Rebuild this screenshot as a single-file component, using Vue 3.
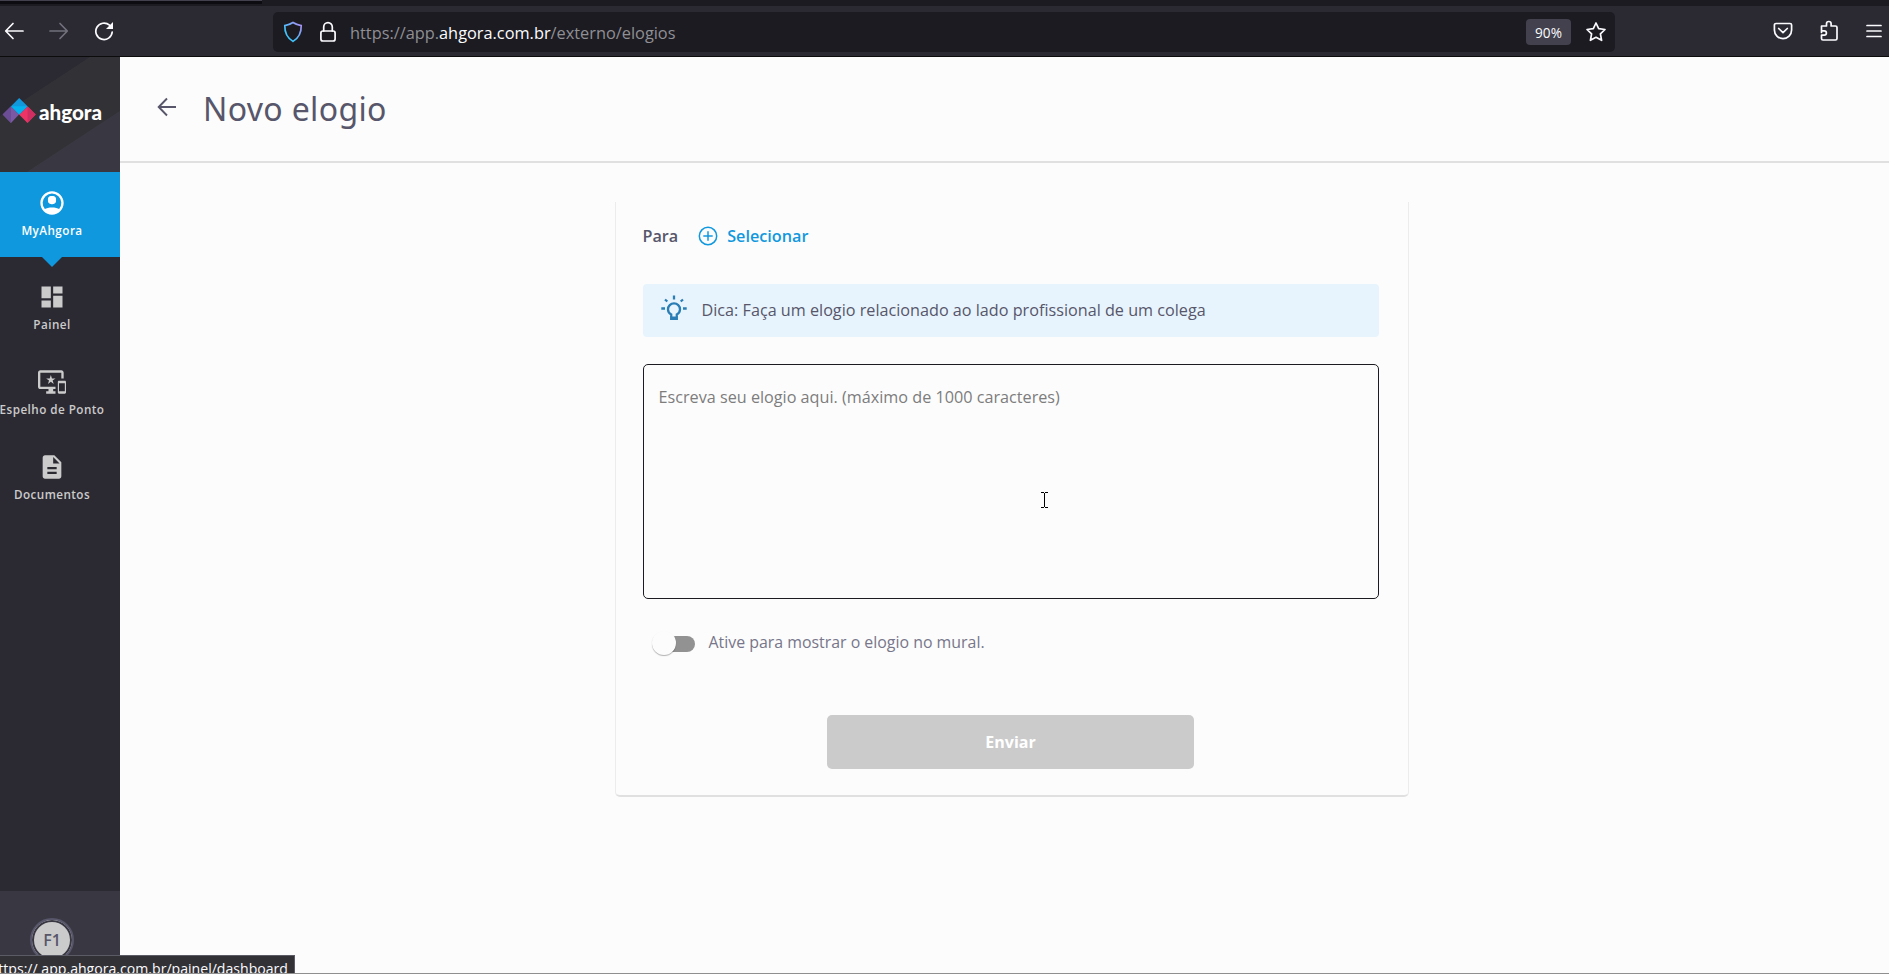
<script setup>
import { ref } from 'vue'

const message = ref('')

const menuItems = [
  {
    label: 'MyAhgora',
    active: true,
    path: 'M12 2C6.480 2 2 6.480 2 12s4.480 10 10 10 10-4.480 10-10S17.520 2 12 2zM5.900 17.100A8 8 0 1 1 18.100 17.100C16 15.300 8 15.300 5.900 17.100zM12 6a3.500 3.500 0 1 0 0 7 3.500 3.500 0 0 0 0-7z',
    extra: 'M12 6a3.500 3.500 0 1 0 0 7 3.500 3.500 0 0 0 0-7z'
  },
  {
    label: 'Painel',
    path: 'M3 13h8V3H3v10zm0 8h8v-6H3v6zm10 0h8V11h-8v10zm0-18v6h8V3h-8z'
  },
  {
    label: 'Espelho de Ponto',
    path: 'M23 11.010L18 11c-.550 0-1 .450-1 1v9c0 .550.450 1 1 1h5c.550 0 1-.450 1-1v-9c0-.550-.450-.990-1-.990zM23 20h-5v-7h5v7zM20 2H2C.890 2 0 2.890 0 4v12c0 1.100.890 2 2 2h7v2H7v2h8v-2h-2v-2h2v-2H2V4h18v5h2V4c0-1.110-.900-2-2-2zm-8.030 7L11 6l-.970 3H7l2.470 1.760-.940 2.910 2.470-1.800 2.470 1.800-.940-2.910L15 9h-3.030z'
  },
  {
    label: 'Documentos',
    path: 'M14 2H6c-1.100 0-1.990.900-1.990 2L4 20c0 1.100.890 2 1.990 2H18c1.100 0 2-.900 2-2V8l-6-6zm2 16H8v-2h8v2zm0-4H8v-2h8v2zm-3-5V3.500L18.500 9H13z'
  }
]
</script>

<template>
  <div class="window">
    <div class="tab-strip">
      <div class="tab-edge"></div>
    </div>

    <div class="toolbar">
      <div class="nav-buttons">
        <svg width="20" height="20" viewBox="0 0 20 20" class="stroke">
          <path d="M19 10H2M9 2.500 1.700 10 9 17.500" />
        </svg>
        <svg width="20" height="20" viewBox="0 0 20 20" class="stroke dim">
          <path d="M1 10h17M11 2.500 18.300 10 11 17.500" />
        </svg>
        <svg width="20" height="20" viewBox="0 0 20 20" class="stroke">
          <path d="M18.200 11A8.200 8.200 0 1 1 15.500 4.200" />
          <path d="M19 1v7h-7z" fill="#fbfbfe" stroke="none" />
        </svg>
      </div>

      <div class="url-bar">
        <svg width="20" height="22" viewBox="0 0 20 22" fill="none">
          <defs>
            <linearGradient id="shield" x1="0" y1="1" x2="1" y2="0">
              <stop offset="0.300" stop-color="#3fc4fb" />
              <stop offset="1" stop-color="#b48cf2" />
            </linearGradient>
          </defs>
          <path
            d="M10 1.500c2.500 1.700 5 2.600 8.200 3.100.2 6.300-2 12-8.200 15.800C3.800 16.600 1.600 10.900 1.800 4.600 5 4.100 7.500 3.200 10 1.500z"
            stroke="url(#shield)"
            stroke-width="1.700"
          />
        </svg>
        <svg class="stroke lock" width="18" height="22" viewBox="0 0 18 22">
          <rect x="1.900" y="10" width="14.200" height="10" rx="2" />
          <path d="M4.700 10V6a4.300 4.300 0 0 1 8.600 0v4" />
        </svg>
        <span class="url">https://app.<b>ahgora.com.br</b>/externo/elogios</span>
        <span class="zoom">90%</span>
        <svg class="stroke star" width="22" height="22" viewBox="0 0 22 22">
          <path d="M11 2l2.700 5.700 6.300.8-4.600 4.400 1.200 6.400L11 16.300l-5.600 3 1.200-6.400L2 8.500l6.300-.8z" />
        </svg>
      </div>

      <div class="tools">
        <svg class="stroke" width="20" height="20" viewBox="0 0 20 20">
          <path d="M3 2.500h14a1.600 1.600 0 0 1 1.600 1.600V9a8.600 8.600 0 0 1-17.200 0V4.100A1.600 1.600 0 0 1 3 2.500zM5.700 7.500 10 11.600l4.300-4.100" />
        </svg>
        <svg class="stroke" width="20" height="22" viewBox="0 0 20 22">
          <path d="M2.500 12.500v-6.500h5V3.800a2.300 2.300 0 0 1 4.600 0V6h4.400a1.500 1.500 0 0 1 1.500 1.500v11a1.500 1.500 0 0 1-1.500 1.500H4a1.500 1.500 0 0 1-1.500-1.500V15.200h2.700a2.200 2.200 0 0 0 0-4.400H2.500" />
        </svg>
        <svg class="stroke" width="18" height="20" viewBox="0 0 18 20">
          <path d="M2 4.500h14M2 10h14M2 15.500h14" />
        </svg>
      </div>
    </div>

    <div class="app">
      <aside class="sidebar">
        <div class="brand">
          <svg width="36" height="28" viewBox="0 0 36 28">
            <path d="M11 9.200 19 17.500 11 26 2.700 17.500z" fill="#7b58a3" />
            <path d="M11 9.200V26L2.700 17.500z" fill="#6b4d96" />
            <path d="M27.500 9.200 35.700 17.500 27.500 26 19 17.500z" fill="#ee3465" />
            <path d="M27.500 9.200 35.700 17.500 27.500 26z" fill="#cf2e62" />
            <path d="M19.200 1 27.500 9.300 19.200 17.600 11 9.300z" fill="#1197dc" />
            <path d="M11 9.300h16.500L19.200 17.600z" fill="#05b2ee" />
          </svg>
          <span>ahgora</span>
        </div>

        <nav>
          <a v-for="item in menuItems" :key="item.label" :class="['menu-item', { active: item.active }]">
            <svg width="28" height="28" viewBox="0 0 24 24" fill="currentColor">
              <path :d="item.path" fill-rule="evenodd" />
              <path v-if="item.extra" :d="item.extra" />
            </svg>
            <span>{{ item.label }}</span>
          </a>
        </nav>

        <div class="user">
          <div class="avatar">F1</div>
        </div>
      </aside>

      <main>
        <header>
          <svg width="20" height="20" viewBox="0 0 20 20">
            <path d="M19 10H2M10 1.500 1.700 10 10 18.500" fill="none" stroke="#57566a" stroke-width="1.900" />
          </svg>
          <h1>Novo elogio</h1>
        </header>

        <section class="card">
          <div class="recipient">
            <span class="label">Para</span>
            <button class="select">
              <svg width="20" height="20" viewBox="0 0 20 20" fill="none" stroke="currentColor" stroke-width="1.500">
                <circle cx="10" cy="10" r="8.700" />
                <path d="M10 5.300v9.400M5.300 10h9.400" />
              </svg>
              <span>Selecionar</span>
            </button>
          </div>

          <div class="tip">
            <svg width="26" height="26" viewBox="0 0 26 26" fill="none" stroke="#2a7db5" stroke-width="2.300">
              <path d="M10.200 23.800v-4.300c-2-1.200-3.200-2.900-3.200-5.100a6 6 0 0 1 12 0c0 2.200-1.200 3.900-3.200 5.100v4.300z" />
              <path d="M11 23h4" stroke-width="3" />
              <path d="M13 .500v4M.300 13.500H4M22 13.500h3.700M4 4.500l2.300 2M22 4.500l-2.300 2" />
            </svg>
            <span>Dica: Faça um elogio relacionado ao lado profissional de um colega</span>
          </div>

          <div class="editor">
            <textarea v-model="message" placeholder="Escreva seu elogio aqui. (máximo de 1000 caracteres)"></textarea>
            <svg class="caret" width="7" height="16" viewBox="0 0 7 16">
              <path d="M0 .500h3M4 .500h3M3.500 1v14M0 15.500h3M4 15.500h3" fill="none" stroke="#000" />
            </svg>
          </div>

          <div class="wall">
            <div class="toggle"><i></i></div>
            <span>Ative para mostrar o elogio no mural.</span>
          </div>

          <button class="send" disabled>Enviar</button>
        </section>
      </main>
    </div>

    <div class="status"><span>https:// app.ahgora.com.br/painel/dashboard</span></div>
    <div class="window-edge"></div>
  </div>
</template>

<style>
body {
  margin: 0;
  overflow: hidden;
}
</style>

<style scoped>
* {
  box-sizing: border-box;
}

.window {
  position: relative;
  display: flex;
  flex-direction: column;
  width: 100vw;
  height: 100vh;
  overflow: hidden;
  font-family: "Open Sans", sans-serif;
  background: #fcfcfc;
}

svg {
  flex: none;
  display: block;
}

button {
  padding: 0;
  font-family: inherit;
  border: 0;
}

.tab-strip {
  flex: none;
  height: 6px;
  background: #1c1b22;
}

.tab-edge {
  width: 262px;
  height: 4px;
  background: #0d0c10;
  border-top: 1px solid #42414d;
}

.toolbar {
  flex: none;
  display: flex;
  align-items: center;
  height: 51px;
  padding: 0 6px 0 4px;
  background: #2b2a33;
  border-bottom: 1px solid #0c0c0d;
}

.stroke {
  fill: none;
  stroke: #fbfbfe;
  stroke-width: 1.7;
  stroke-linecap: round;
  stroke-linejoin: round;
}

.dim {
  stroke: #72717c;
}

.nav-buttons {
  display: flex;
  gap: 25px;
  width: 269px;
}

.url-bar {
  display: flex;
  align-items: center;
  width: 1342px;
  height: 40px;
  margin-top: 1px;
  padding: 0 8px 0 10px;
  background: #1c1b22;
  border-radius: 5px;
}

.lock {
  margin-left: 16px;
}

.url {
  flex: 1;
  margin: 2px 0 0 13px;
  color: #8f8f94;
  font-size: 16.33px;
}

.url b {
  color: #fbfbfe;
  font-weight: 400;
}

.zoom {
  width: 45px;
  height: 26px;
  color: #fbfbfe;
  font-size: 13.6px;
  line-height: 28px;
  text-align: center;
  background: #42414d;
  border-radius: 4px;
}

.star {
  margin-left: 14px;
}

.tools {
  display: flex;
  align-items: center;
  gap: 26px;
  margin-left: auto;
}

.app {
  flex: 1;
  display: flex;
  min-height: 0;
}

.sidebar {
  display: flex;
  flex-direction: column;
  width: 120px;
  background: #2b2a33;
}

.brand {
  display: flex;
  align-items: center;
  height: 115px;
  color: #fff;
  font-family: Lato, sans-serif;
  font-size: 20.6px;
  font-weight: 900;
  line-height: 28px;
  background: linear-gradient(146.7deg, #2b2a33 30.3%, #323236 30.7%, #323236 68.3%, #393842 68.7%);
}

.brand svg {
  margin-bottom: 8px;
}

.brand span {
  margin: 0 0 5px 3px;
}

.menu-item {
  position: relative;
  display: flex;
  flex-direction: column;
  align-items: center;
  height: 85px;
  padding: 17px 16px 0 0;
  color: #cbcbcb;
  font-size: 11.7px;
  font-weight: 600;
  line-height: 16px;
  letter-spacing: 0.45px;
  white-space: nowrap;
}

.menu-item span {
  margin-top: 5px;
}

.menu-item.active {
  margin-bottom: 9px;
  color: #fff;
  background: #1098de;
}

/* pointer below the current entry */
.menu-item.active::after {
  content: "";
  position: absolute;
  top: 85px;
  left: 42px;
  border: 10px solid transparent;
  border-top-color: #1098de;
  border-bottom: 0;
}

.user {
  height: 83px;
  margin-top: auto;
  padding: 27px 0 0 30px;
  background: #393842;
}

.avatar {
  width: 44px;
  height: 44px;
  color: #57566a;
  font-size: 16px;
  font-weight: 600;
  line-height: 40px;
  text-align: center;
  background: #cbcbcb;
  border: 2px solid #57566a;
  border-radius: 50%;
  box-shadow: inset 0 0 0 2px #393842;
}

main {
  flex: 1;
  display: flex;
  flex-direction: column;
  align-items: center;
}

header {
  display: flex;
  align-items: center;
  width: 100%;
  height: 106px;
  padding-left: 37px;
  border-bottom: 2px solid #e0e0e0;
}

header svg {
  margin-bottom: 4px;
}

h1 {
  margin: 0 0 0 26px;
  color: #57566a;
  font-family: "Noto Sans", sans-serif;
  font-size: 32px;
  font-weight: 400;
  line-height: 40px;
  letter-spacing: 0.35px;
}

.card {
  display: flex;
  flex-direction: column;
  width: 794px;
  height: 595px;
  margin: 39px 0 0 14px;
  padding: 20px 29px 0 27px;
  border: 1px solid #ececec;
  border-top: 0;
  border-bottom: 2px solid #e0e0e0;
  border-radius: 0 0 5px 5px;
}

.recipient {
  display: flex;
  align-items: center;
  height: 28px;
  color: #57566a;
  font-size: 16.2px;
  font-weight: 600;
}

.select {
  display: flex;
  align-items: center;
  gap: 9px;
  margin-left: 20px;
  color: #1098de;
  font-size: 16.2px;
  font-weight: 600;
  background: none;
}

.tip {
  display: flex;
  align-items: center;
  gap: 15px;
  height: 53px;
  margin-top: 34px;
  padding-left: 18px;
  color: #57566a;
  font-size: 16.2px;
  background: #e7f4fd;
  border-radius: 4px;
}

.tip svg {
  margin-bottom: 6px;
}

.tip span {
  margin-bottom: 1px;
}

.editor {
  position: relative;
  height: 235px;
  margin-top: 27px;
}

textarea {
  display: block;
  width: 100%;
  height: 100%;
  padding: 21px 15px;
  font-family: inherit;
  font-size: 16.2px;
  line-height: 22px;
  background: transparent;
  border: 1px solid #1c1b22;
  border-radius: 5px;
  outline: 0;
  resize: none;
}

textarea::placeholder {
  color: #7d7d7d;
}

.caret {
  position: absolute;
  top: 128px;
  left: 398px;
}

.wall {
  display: flex;
  align-items: center;
  gap: 14px;
  height: 28px;
  margin-top: 29px;
  padding-left: 9px;
  color: #77768a;
  font-size: 15.9px;
}

.wall span {
  margin-bottom: 1px;
}

.toggle {
  width: 38px;
  height: 16px;
  margin: 4px 0 0 5px;
  background: #929292;
  border-radius: 8px;
}

.toggle i {
  display: block;
  width: 24px;
  height: 24px;
  margin: -5px 0 0 -5px;
  background: #fcfcfc;
  border-radius: 50%;
  box-shadow: 0 1px 1px rgba(0, 0, 0, 0.3);
}

.send {
  align-self: center;
  width: 367px;
  height: 54px;
  margin-top: 59px;
  color: #fff;
  font-size: 16px;
  font-weight: 700;
  background: #cbcbcb;
  border-radius: 5px;
}

/* link preview shown by the browser over the page */
.status {
  position: absolute;
  bottom: 0;
  left: 0;
  display: flex;
  justify-content: flex-end;
  width: 295px;
  height: 19px;
  padding-right: 6px;
  overflow: hidden;
  color: #fbfbfe;
  font-size: 14.1px;
  line-height: 26px;
  white-space: nowrap;
  background: #323236;
  border: 1px solid #5b5b66;
  border-width: 1px 1px 0 0;
}

.window-edge {
  position: absolute;
  bottom: 0;
  left: 0;
  width: 100%;
  height: 1px;
  background: #8f8f8f;
}
</style>
